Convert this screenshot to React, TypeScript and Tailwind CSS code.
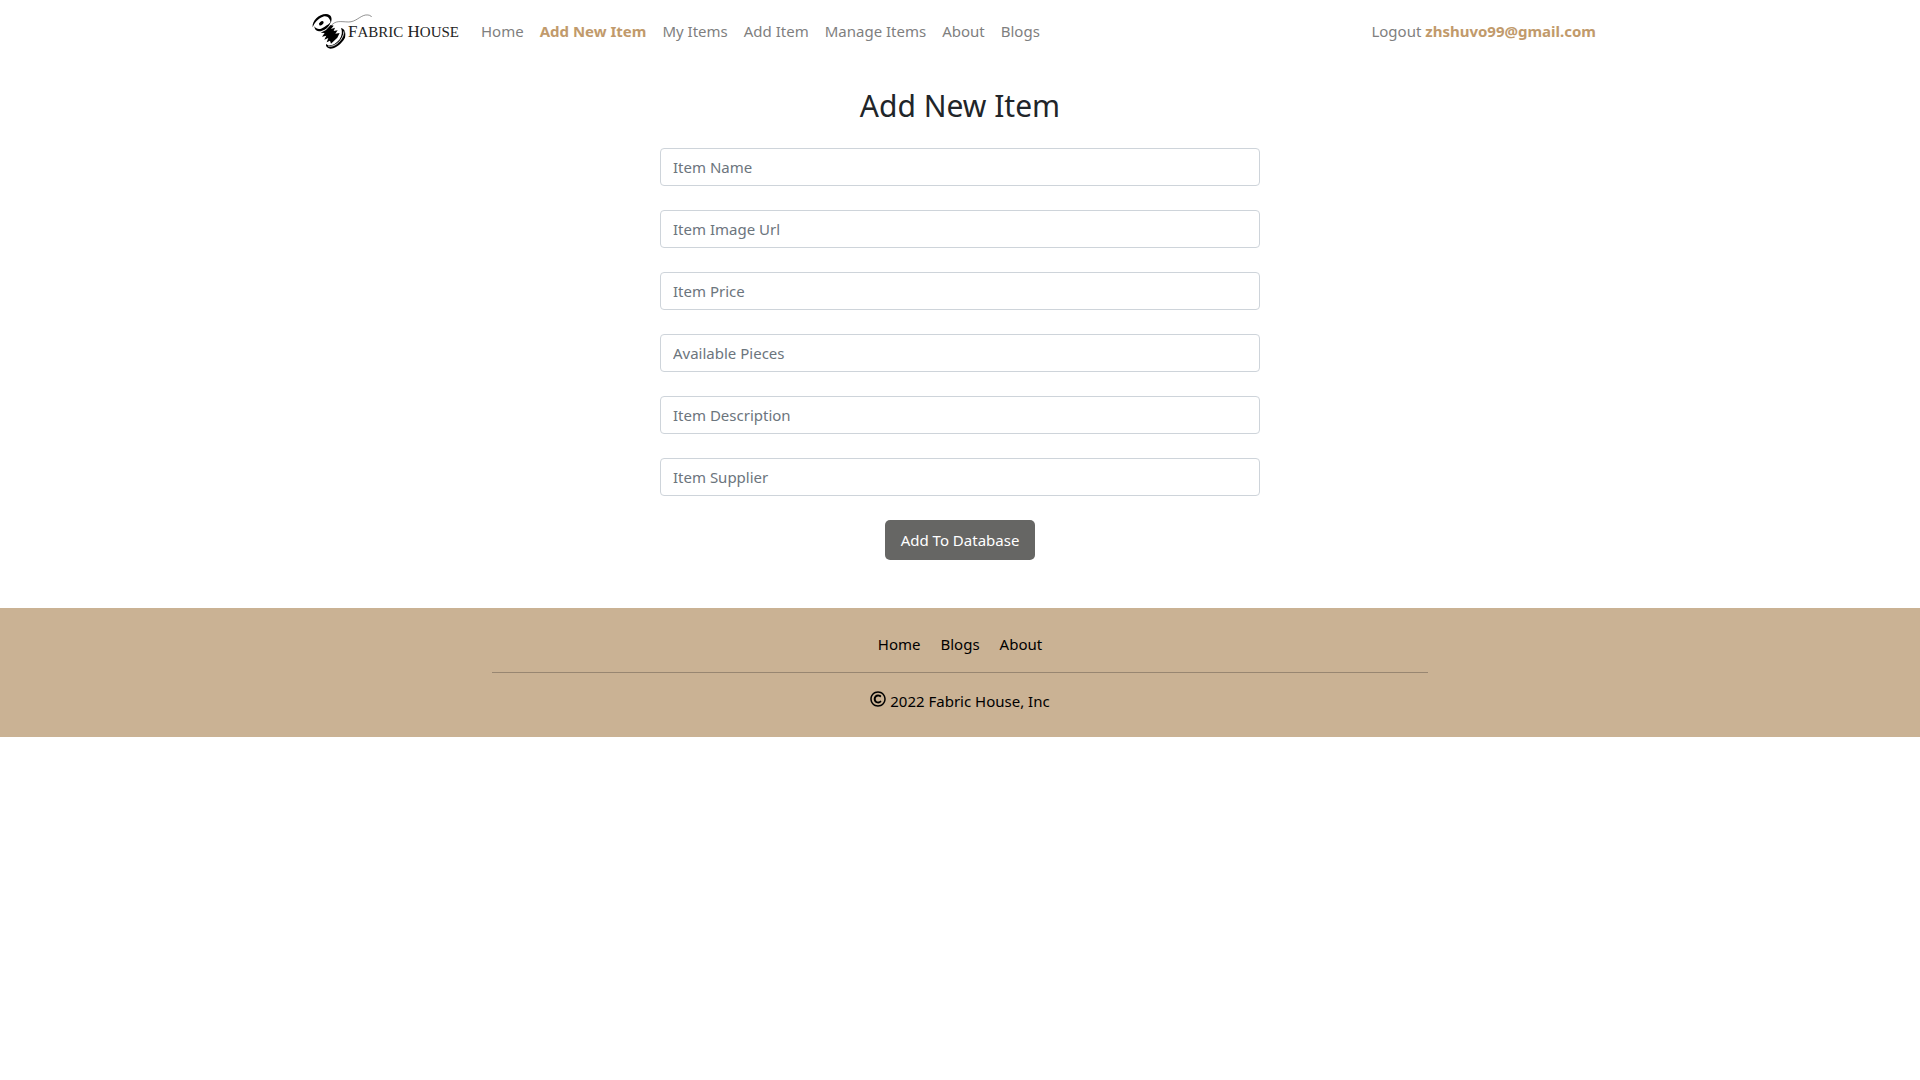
import React from "react";
import { FaRegCopyright } from "react-icons/fa";

const navLinks = ["Home", "Add New Item", "My Items", "Add Item", "Manage Items", "About", "Blogs"];
const fields = ["Item Name", "Item Image Url", "Item Price", "Available Pieces", "Item Description", "Item Supplier"];
const footerLinks = ["Home", "Blogs", "About"];

function Logo() {
  return (
    <svg viewBox="0 0 149 38" className="h-[38px] w-[149px]" role="img" aria-label="Fabric House">
      <g transform="scale(0.3333) translate(-36 -36)">
        <path d="M38 82C36 62 56 42 78 42C95 43 98 56 92 70C91 55 82 46 69 50C54 55 43 68 38 82Z" fill="#000" />
        <path d="M92 66C88 82 72 94 57 94C48 93 43 87 43 79C50 90 62 89 73 81C82 75 88 71 92 66Z" fill="#000" />
        <ellipse cx="64" cy="70" rx="8" ry="5" transform="rotate(-40 64 70)" fill="#000" />
        <path d="M92 75L101 77L93 87L105 83L101 93L113 91L106 101L119 99L112 113L104 121L93 131L90 122L80 127L85 114L73 119L79 107L66 110L74 99L62 98L78 90Z" fill="#000" />
        <path d="M123 84C135 87 138 99 135 113C124 133 105 146 91 146C81 145 77 139 78 132C89 141 105 134 118 119C126 108 128 95 123 84Z" fill="#000" />
        <path d="M84 138C104 144 131 119 132 94" stroke="#fff" strokeWidth="2.5" fill="none" />
        <path d="M94 76C108 61 121 65 145 66C168 66 179 48 197 45C207 44 213 47 215 51" stroke="#333" strokeWidth="1.6" fill="none" />
      </g>
      <text x="36" y="25" fontSize="17" fill="#222" fontFamily="'Liberation Serif', serif">
        F<tspan fontSize="15">ABRIC</tspan> H<tspan fontSize="15">OUSE</tspan>
      </text>
    </svg>
  );
}

export default function App() {
  return (
    <div className="bg-white font-['Noto_Sans',sans-serif] text-[15px] leading-6 text-[#212529]">
      <header>
        <nav className="mx-auto flex max-w-[1320px] items-center px-3 py-3">
          <a href="#home" className="mr-5">
            <Logo />
          </a>
          <ul className="flex gap-4">
            {navLinks.map((l) => (
              <li key={l}>
                <a href="#" className={l === "Add New Item" ? "font-bold text-[#c19a6b]" : "text-[#7f7f7f]"}>{l}</a>
              </li>
            ))}
          </ul>
          <button type="button" className="ml-auto pr-3 text-[#7f7f7f]">
            Logout <span className="font-bold text-[#c19a6b]">zhshuvo99@gmail.com</span>
          </button>
        </nav>
      </header>
      <main className="mx-auto flex max-w-[600px] flex-col items-center pt-6 pb-12">
        <h1 className="mb-[22px] text-[30px] leading-10">Add New Item</h1>
        <form className="flex w-full flex-col items-center gap-6">
          {fields.map((f) => (
            <input
              key={f}
              type="text"
              aria-label={f}
              placeholder={f}
              className="h-[38px] w-full rounded border border-[#ced4da] px-3 placeholder:text-[#6c757d]"
            />
          ))}
          <button type="button" className="h-10 rounded-[5px] bg-[#666664] px-4 text-white">
            Add To Database
          </button>
        </form>
      </main>
      <footer className="bg-[#cab294] py-6 text-center text-black">
        <ul className="flex justify-center gap-5">
          {footerLinks.map((l) => (
            <li key={l}>
              <a href="#">{l}</a>
            </li>
          ))}
        </ul>
        <hr className="mx-auto my-4 max-w-[936px] border-[#988671]" />
        <p>
          <FaRegCopyright className="inline size-4 align-baseline" aria-hidden="true" /> 2022 Fabric House, Inc
        </p>
      </footer>
    </div>
  );
}
